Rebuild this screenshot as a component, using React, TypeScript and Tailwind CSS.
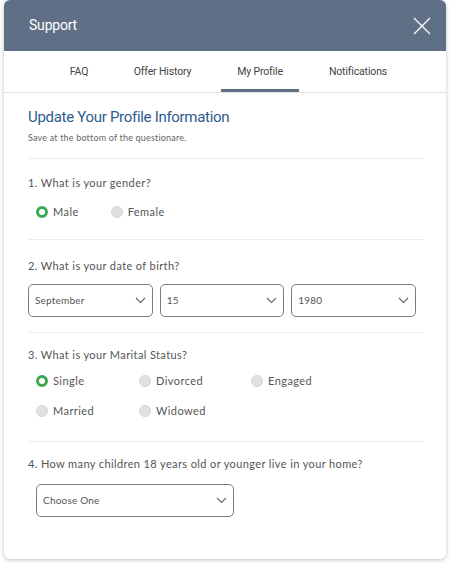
import React from "react";

const Radio = ({ checked, label }: { checked?: boolean; label: string }) => (
  <div className="flex items-center gap-[5px] h-[14px]">
    {checked ? (
      <span className="w-[12px] h-[12px] rounded-full border-[3px] border-[#3aa852] bg-white" />
    ) : (
      <span className="w-[12px] h-[12px] rounded-full bg-[#e0e0e0] border border-[#d6d6d6]" />
    )}
    <span className="text-[11px] leading-[14px] tracking-[0.04em] text-[#555]">{label}</span>
  </div>
);

const Chevron = () => (
  <svg width="11" height="7" viewBox="0 0 11 7" fill="none">
    <path d="M1 1l4.5 4.5L10 1" stroke="#666" strokeWidth="1.1" />
  </svg>
);

const Select = ({ value, className }: { value: string; className?: string }) => (
  <div
    className={
      "h-[33px] border border-[#7a7a7a] rounded-[5px] flex items-center justify-between pl-[6px] pr-[6px] " +
      (className ?? "")
    }
  >
    <span className="text-[10px] tracking-[0.02em] text-[#555]">{value}</span>
    <Chevron />
  </div>
);

const Q = ({ children, className }: { children: React.ReactNode; className: string }) => (
  <div className={"text-[11px] leading-[14px] text-[#555] tracking-[0.035em] " + className}>{children}</div>
);

export default function App() {
  const roboto = { fontFamily: "Roboto, sans-serif" };
  return (
    <div className="w-[450px] h-[567px] bg-white" style={{ fontFamily: "Lato, sans-serif" }}>
      <div className="ml-[4px] w-[442px] h-[559px] bg-white rounded-[6px] shadow-[0_1px_4px_rgba(0,0,0,0.25)] overflow-hidden flex flex-col">
        <div className="h-[51px] shrink-0 bg-[#5f6f86] flex items-center justify-between pl-[25px] pr-[15px]">
          <span className="text-white text-[14px] tracking-[-0.2px]" style={roboto}>
            Support
          </span>
          <svg width="18" height="18" viewBox="0 0 18 18">
            <path d="M1 1L17 17M17 1L1 17" stroke="#fff" strokeWidth="1.2" />
          </svg>
        </div>
        <div className="h-[42px] shrink-0 border-b border-[#e2e2e2] flex items-stretch text-[10.5px] tracking-[-0.15px] text-[#444]" style={roboto}>
          <div className="w-[50px]" />
          <div className="w-[50px] flex items-center justify-center">FAQ</div>
          <div className="w-[117px] flex items-center justify-center">Offer History</div>
          <div className="w-[78px] flex items-center justify-center border-b-[3px] border-[#5f6f86] pt-[3px]">My Profile</div>
          <div className="w-[118px] flex items-center justify-center">Notifications</div>
        </div>
        <div className="pl-[24px] pr-[22px]">
          <div className="pt-[14px] text-[15px] leading-[20px] tracking-[-0.3px] text-[#2d5b8d]" style={roboto}>
            Update Your Profile Information
          </div>
          <div className="mt-[5px] text-[9px] leading-[12px] text-[#666] tracking-[0.02em]">Save at the bottom of the questionare.</div>
          <div className="mt-[14px] border-t border-[#ececec]" />
          <Q className="pt-[17px]">1. What is your gender?</Q>
          <div className="mt-[15px] pl-[8px] flex gap-[32px]">
            <Radio checked label="Male" />
            <Radio label="Female" />
          </div>
          <div className="mt-[20px] border-t border-[#ececec]" />
          <Q className="pt-[19px]">2. What is your date of birth?</Q>
          <div className="mt-[11px] flex gap-[7px] pr-[8px]">
            <Select value="September" className="flex-1" />
            <Select value="15" className="flex-1" />
            <Select value="1980" className="flex-1" />
          </div>
          <div className="mt-[15px] border-t border-[#ececec]" />
          <Q className="pt-[15px]">3. What is your Marital Status?</Q>
          <div className="mt-[12px] pl-[8px] grid grid-cols-[103px_112px_100px] gap-y-[16px]">
            <Radio checked label="Single" />
            <Radio label="Divorced" />
            <Radio label="Engaged" />
            <Radio label="Married" />
            <Radio label="Widowed" />
          </div>
          <div className="mt-[23px] border-t border-[#ececec]" />
          <Q className="pt-[15px]">4. How many children 18 years old or younger live in your home?</Q>
          <div className="mt-[13px] pl-[8px]">
            <Select value="Choose One" className="w-[198px]" />
          </div>
        </div>
      </div>
    </div>
  );
}
